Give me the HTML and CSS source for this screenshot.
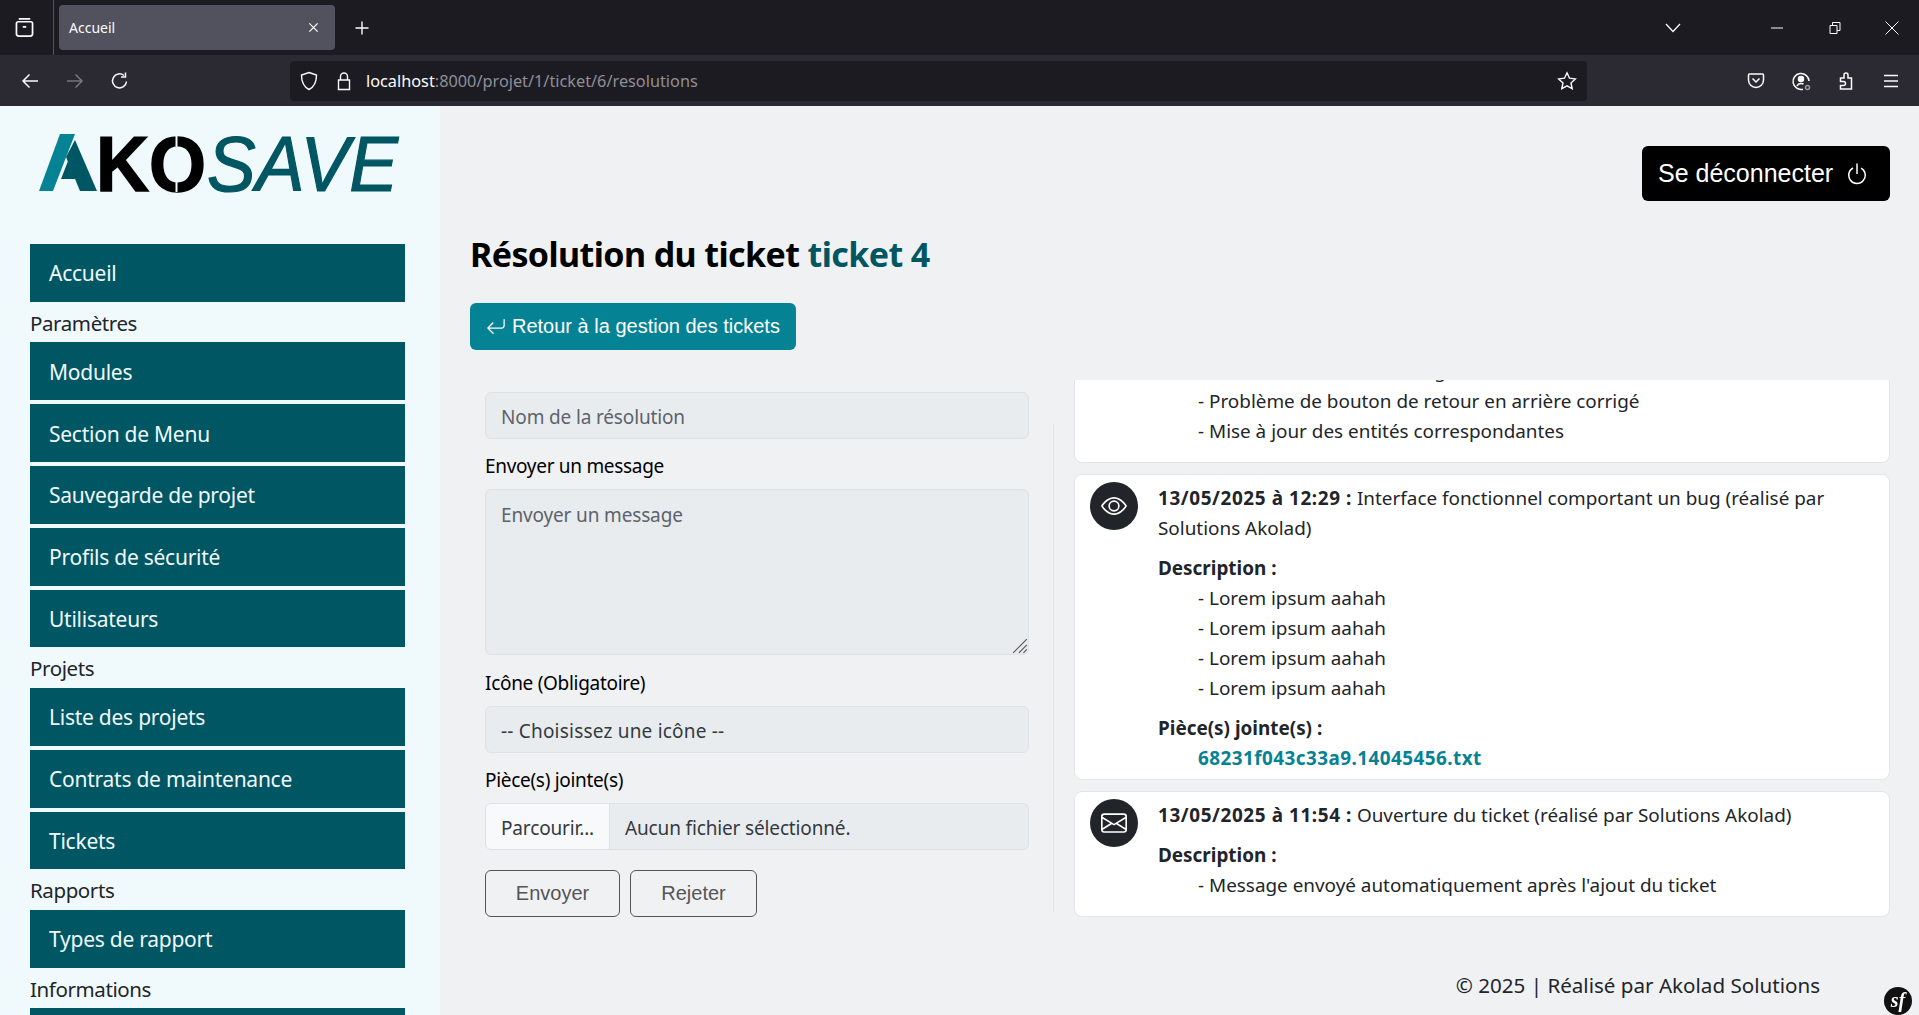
FILE: index.html
```html
<!DOCTYPE html>
<html lang="fr">
<head>
    <meta charset="UTF-8">
    <meta name="viewport" content="width=device-width, initial-scale=1.0">
    <title>Accueil</title>
    <link rel="stylesheet" href="styles.css">
</head>
<body>
    <!-- browser window -->
    <div class="tabbar">
        <div class="tab-view">
            <svg class="ico" viewBox="0 0 20 20"><path d="M5 2.500h10M3 6.500a1.500 1.500 0 0 1 1.500-1.500h11a1.500 1.500 0 0 1 1.500 1.500v9a2 2 0 0 1-2 2H5a2 2 0 0 1-2-2zM8.500 9.500h3"/></svg>
        </div>
        <div class="tab">
            <span class="tab-title">Accueil</span>
            <svg class="tab-close" viewBox="0 0 12 12"><path d="M1.500 1.500l9 9M10.500 1.500l-9 9"/></svg>
        </div>
        <svg class="tab-new" viewBox="0 0 16 16"><path d="M8 1.500v13M1.500 8h13"/></svg>
        <div class="tabbar-right">
            <svg class="tab-list" viewBox="0 0 16 10"><path d="M1 1l7 7.500L15 1"/></svg>
            <svg class="win-btn win-min" viewBox="0 0 12 12"><path d="M0 6h12"/></svg>
            <svg class="win-btn win-max" viewBox="0 0 12 12"><path d="M1 3.500h7v8H1zM3.500 3.500V.5h7.500v8H8"/></svg>
            <svg class="win-btn win-close" viewBox="0 0 14 14"><path d="M.5.5l13 13M13.500.5l-13 13"/></svg>
        </div>
    </div>
    <div class="toolbar">
        <svg class="nav-ico" viewBox="0 0 20 20"><path d="M18 10H3M9.500 3.500L3 10l6.500 6.500"/></svg>
        <svg class="nav-ico nav-off" viewBox="0 0 20 20"><path d="M2 10h15M10.500 3.500L17 10l-6.500 6.500"/></svg>
        <svg class="nav-ico" viewBox="0 0 20 20"><path d="M16.500 10.500a7 7 0 1 1-2.500-6M15.500 1.500v4.500h-4.500"/></svg>
        <div class="urlbar">
            <svg class="url-ico" viewBox="0 0 20 20"><path d="M10 1.500l7.500 2.500c0 7-1.500 11.500-7.500 14.500C4 15.500 2.500 11 2.500 4z"/></svg>
            <svg class="url-ico url-lock" viewBox="0 0 20 20"><path d="M4.500 9h11v9.500h-11zM6.500 9V5.500a3.500 3.500 0 0 1 7 0V9"/></svg>
            <span class="url-text"><span class="url-host">localhost</span>:8000/projet/1/ticket/6/resolutions</span>
            <svg class="url-star" viewBox="0 0 20 20"><path d="M10 1.800l2.500 5.400 5.800.7-4.300 4 1.200 5.800-5.200-2.900-5.200 2.900 1.200-5.800-4.300-4 5.800-.7z"/></svg>
        </div>
        <div class="toolbar-right">
            <svg class="nav-ico" viewBox="0 0 20 20"><path d="M3.500 3h13a1 1 0 0 1 1 1v5a7.500 7.500 0 0 1-15 0V4a1 1 0 0 1 1-1zM6.500 7.500L10 11l3.500-3.500"/></svg>
            <svg class="nav-ico" viewBox="0 0 20 20"><path d="M12 18.200A8 8 0 1 1 18 10M6 15c1-2 2.500-2.500 4-2.500s2 .3 2.500.8"/><circle cx="10" cy="8" r="2.500" fill="#fbfbfe"/><circle cx="16.500" cy="16.500" r="2" class="dot"/></svg>
            <svg class="nav-ico" viewBox="0 0 20 20"><path d="M4.500 7h3.500V4a2 2 0 0 1 4 0v3h3.500v11h-11v-3.500h3a2 2 0 0 0 0-4h-3z"/></svg>
            <svg class="nav-ico" viewBox="0 0 20 20"><path d="M3 4.500h14M3 10h14M3 15.500h14"/></svg>
        </div>
    </div>

    <div class="app">
        <aside class="sidebar">
            <div class="logo">
                <svg class="logo-svg" viewBox="0 0 370 62">
                    <polygon class="logo-teal" points="0,57 14,57 36,0 21,0"/>
                    <polygon class="logo-dark" points="36,6 58,57 41,57 27,23"/>
                    <polygon class="logo-dark" points="22,45 37,45 29,27"/>
                    <text class="logo-ko" x="57" y="57" textLength="110" lengthAdjust="spacingAndGlyphs">KO</text>
                    <rect class="logo-cut" x="136.500" y="0" width="2" height="14"/>
                    <rect class="logo-cut" x="136.500" y="44" width="2" height="14"/>
                    <text class="logo-save" x="168" y="57" textLength="191" lengthAdjust="spacingAndGlyphs">SAVE</text>
                </svg>
            </div>
            <nav class="menu">
                <a class="menu-item">Accueil</a>
                <div class="menu-label">Paramètres</div>
                <div class="menu-group">
                    <a class="menu-item">Modules</a>
                    <a class="menu-item">Section de Menu</a>
                    <a class="menu-item">Sauvegarde de projet</a>
                    <a class="menu-item">Profils de sécurité</a>
                    <a class="menu-item">Utilisateurs</a>
                </div>
                <div class="menu-label">Projets</div>
                <div class="menu-group">
                    <a class="menu-item">Liste des projets</a>
                    <a class="menu-item">Contrats de maintenance</a>
                    <a class="menu-item">Tickets</a>
                </div>
                <div class="menu-label">Rapports</div>
                <a class="menu-item">Types de rapport</a>
                <div class="menu-label">Informations</div>
                <a class="menu-item"></a>
            </nav>
        </aside>

        <main class="content">
            <div class="topbar">
                <button class="logout-btn">Se déconnecter
                    <svg class="logout-ico" viewBox="0 0 16 16"><path d="M7.500 1v7h1V1z"/><path d="M3 8.812a5 5 0 0 1 2.578-4.375l-.485-.874A6 6 0 1 0 11 3.616l-.501.865A5 5 0 1 1 3 8.812"/></svg>
                </button>
            </div>
            <h1 class="page-title">Résolution du ticket <span class="title-accent">ticket 4</span></h1>
            <button class="back-btn">
                <svg class="back-ico" viewBox="0 0 16 16"><path d="M14.500 1.500a.5.5 0 0 1 .5.5v4.800a2.500 2.500 0 0 1-2.500 2.500H2.707l3.347 3.346a.5.5 0 0 1-.708.708l-4.200-4.200a.5.5 0 0 1 0-.708l4-4a.5.5 0 1 1 .708.708L2.707 8.300H12.500A1.500 1.500 0 0 0 14 6.800V2a.5.5 0 0 1 .5-.5"/></svg>
                Retour à la gestion des tickets
            </button>

            <div class="ticket-row">
                <form class="res-form">
                    <input class="field field-name" type="text" placeholder="Nom de la résolution">
                    <label class="field-label">Envoyer un message</label>
                    <div class="area-wrap">
                        <textarea class="field field-area" placeholder="Envoyer un message"></textarea>
                        <svg class="area-grip" viewBox="0 0 14 14"><path d="M1 13L13 1M6 13l7-7M10 13l3-3"/></svg>
                    </div>
                    <label class="field-label">Icône (Obligatoire)</label>
                    <div class="field field-select">-- Choisissez une icône --</div>
                    <label class="field-label">Pièce(s) jointe(s)</label>
                    <div class="field field-file">
                        <span class="file-btn">Parcourir...</span>
                        <span class="file-name">Aucun fichier sélectionné.</span>
                    </div>
                    <div class="form-actions">
                        <button type="button" class="outline-btn btn-send">Envoyer</button>
                        <button type="button" class="outline-btn btn-reject">Rejeter</button>
                    </div>
                </form>
                <div class="row-sep"></div>
                <div class="timeline">
                    <div class="event event-pad">
                        <div class="event-spacer"></div>
                        <div class="event-body">
                            <p class="event-item">- Amélioration du titre design</p>
                            <p class="event-item">- Problème de bouton de retour en arrière corrigé</p>
                            <p class="event-item">- Mise à jour des entités correspondantes</p>
                        </div>
                    </div>
                    <div class="event">
                        <div class="event-icon">
                            <svg class="event-svg" viewBox="0 0 16 16"><path d="M16 8s-3-5.500-8-5.500S0 8 0 8s3 5.500 8 5.500S16 8 16 8M1.173 8a13 13 0 0 1 1.660-2.043C4.120 4.668 5.880 3.500 8 3.500s3.879 1.168 5.168 2.457A13 13 0 0 1 14.828 8q-.086.130-.195.288c-.335.480-.830 1.120-1.465 1.755C11.879 11.332 10.119 12.500 8 12.500s-3.879-1.168-5.168-2.457A13 13 0 0 1 1.172 8z"/><path d="M8 5.500a2.500 2.500 0 1 0 0 5 2.500 2.500 0 0 0 0-5M4.500 8a3.500 3.500 0 1 1 7 0 3.500 3.500 0 0 1-7 0"/></svg>
                        </div>
                        <div class="event-body">
                            <p class="event-line"><b class="event-date">13/05/2025 à 12:29 :</b> Interface fonctionnel comportant un bug (réalisé par Solutions Akolad)</p>
                            <p class="event-head"><b>Description :</b></p>
                            <p class="event-item">- Lorem ipsum aahah</p>
                            <p class="event-item">- Lorem ipsum aahah</p>
                            <p class="event-item">- Lorem ipsum aahah</p>
                            <p class="event-item">- Lorem ipsum aahah</p>
                            <p class="event-head"><b>Pièce(s) jointe(s) :</b></p>
                            <p class="event-item"><a class="event-file">68231f043c33a9.14045456.txt</a></p>
                        </div>
                    </div>
                    <div class="event event-pad">
                        <div class="event-icon">
                            <svg class="event-svg" viewBox="0 0 16 16"><path d="M0 4a2 2 0 0 1 2-2h12a2 2 0 0 1 2 2v8a2 2 0 0 1-2 2H2a2 2 0 0 1-2-2zm2-1a1 1 0 0 0-1 1v.217l7 4.200 7-4.200V4a1 1 0 0 0-1-1zm13 2.383-4.708 2.825L15 11.105zm-.034 6.876-5.640-3.471L8 9.583l-1.326-.795-5.640 3.470A1 1 0 0 0 2 13h12a1 1 0 0 0 .966-.741M1 11.105l4.708-2.897L1 5.383z"/></svg>
                        </div>
                        <div class="event-body">
                            <p class="event-line"><b class="event-date">13/05/2025 à 11:54 :</b> Ouverture du ticket (réalisé par Solutions Akolad)</p>
                            <p class="event-head"><b>Description :</b></p>
                            <p class="event-item">- Message envoyé automatiquement après l'ajout du ticket</p>
                        </div>
                    </div>
                </div>
            </div>

            <footer class="page-footer">© 2025 | Réalisé par Akolad Solutions</footer>
        </main>
    </div>

    <div class="sf-badge">sf</div>
</body>
</html>
```
FILE: styles.css
```css
* {
    box-sizing: border-box;
}
html, body {
    height: 100%;
}
body {
    margin: 0;
    overflow: hidden;
    font-family: "Noto Sans", sans-serif;
    color: #212529;
    background-color: #f0f1f3;
}

/* browser chrome */
.tabbar {
    display: flex;
    align-items: center;
    height: 55px;
    background-color: #1c1b22;
}
.tab-view {
    display: flex;
    align-items: center;
    justify-content: center;
    width: 54px;
    height: 55px;
    padding-right: 5px;
    border-right: 1px solid #55545c;
}
.ico {
    width: 23px;
    height: 23px;
    fill: none;
    stroke: #fbfbfe;
    stroke-width: 1.5;
}
.tab {
    display: flex;
    align-items: center;
    justify-content: space-between;
    width: 276px;
    height: 45px;
    margin-left: 5px;
    padding: 0 16px 0 10px;
    border-radius: 4px;
    background-color: #52515e;
    color: #fbfbfe;
    font-size: 14px;
}
.tab-close {
    width: 11px;
    height: 11px;
    fill: none;
    stroke: #fbfbfe;
    stroke-width: 1.4;
}
.tab-new {
    width: 16px;
    height: 16px;
    margin-left: 19px;
    fill: none;
    stroke: #fbfbfe;
    stroke-width: 1.4;
}
.tabbar-right {
    display: flex;
    align-items: center;
    margin-left: auto;
    padding-right: 20px;
}
.tab-list {
    width: 16px;
    height: 10px;
    margin-right: 90px;
    fill: none;
    stroke: #fbfbfe;
    stroke-width: 1.3;
}
.win-btn {
    fill: none;
    stroke: #fbfbfe;
    stroke-width: 1;
}
.win-min {
    width: 12px;
    height: 12px;
    margin-right: 46px;
}
.win-max {
    width: 12px;
    height: 12px;
    margin-right: 44px;
}
.win-close {
    width: 14px;
    height: 14px;
}
.toolbar {
    display: flex;
    align-items: center;
    height: 51px;
    padding-left: 20px;
    background-color: #2b2a33;
}
.nav-ico {
    flex: none;
    width: 20px;
    height: 20px;
    margin-right: 25px;
    fill: none;
    stroke: #fbfbfe;
    stroke-width: 1.5;
}
.nav-off {
    stroke: #77767c;
}
.dot {
    fill: #2b2a33;
    stroke: #9a999f;
}
.urlbar {
    display: flex;
    align-items: center;
    flex: none;
    width: 1297px;
    height: 40px;
    margin-left: 135px;
    padding: 0 10px 0 9px;
    border-radius: 4px;
    background-color: #1c1b22;
}
.url-ico {
    width: 20px;
    height: 20px;
    fill: none;
    stroke: #fbfbfe;
    stroke-width: 1.4;
}
.url-lock {
    margin-left: 15px;
}
.url-text {
    margin-left: 12px;
    color: #8f8f96;
    font-size: 16.3px;
}
.url-host {
    color: #fbfbfe;
}
.url-star {
    width: 20px;
    height: 20px;
    margin-left: auto;
    fill: none;
    stroke: #fbfbfe;
    stroke-width: 1.4;
}
.toolbar-right {
    display: flex;
    margin-left: 159px;
}

/* app layout */
.app {
    display: flex;
    height: 909px;
    overflow: hidden;
}
.sidebar {
    flex: none;
    width: 440px;
    padding: 0 35px 0 30px;
    overflow: hidden;
    background-color: #f0f9fb;
}
.logo {
    height: 138px;
    padding: 28px 0 0 9px;
}
.logo-svg {
    display: block;
    width: 370px;
    height: 62px;
}
.logo-teal {
    fill: #068295;
}
.logo-dark {
    fill: #005662;
}
.logo-ko {
    font-family: "Liberation Sans", sans-serif;
    font-weight: 700;
    font-size: 78px;
    fill: #000;
    stroke: #000;
    stroke-width: 1.5;
}
.logo-cut {
    fill: #f0f9fb;
}
.logo-save {
    font-family: "Liberation Sans", sans-serif;
    font-style: italic;
    font-size: 78px;
    fill: #005662;
    stroke: #005662;
    stroke-width: 1.2;
}
.menu-group {
    display: flex;
    flex-direction: column;
    gap: 4px;
}
.menu-item {
    display: flex;
    align-items: center;
    height: 57.8px;
    padding: 1px 0 0 19px;
    background-color: #005662;
    color: #f0f9fb;
    font-size: 21px;
    letter-spacing: -0.25px;
}
.menu-label {
    display: flex;
    align-items: center;
    height: 40.6px;
    padding-top: 1px;
    font-size: 20.5px;
    letter-spacing: -0.4px;
}

.content {
    flex: 1;
    min-width: 0;
    padding: 0 29px 0 30px;
}
.topbar {
    display: flex;
    justify-content: flex-end;
    padding-top: 40px;
}
.logout-btn {
    display: flex;
    align-items: center;
    gap: 12px;
    width: 248px;
    height: 55px;
    padding: 0 0 0 16px;
    border: none;
    border-radius: 6px;
    background-color: #000;
    color: #fff;
    font-family: "Liberation Sans", sans-serif;
    font-size: 25px;
}
.logout-ico {
    width: 24px;
    height: 24px;
    fill: #fff;
}
.page-title {
    margin: 31px 0 0;
    font-size: 34px;
    line-height: 44px;
    font-weight: 700;
    color: #000;
    letter-spacing: -0.6px;
}
.title-accent {
    color: #005662;
}
.back-btn {
    display: flex;
    align-items: center;
    gap: 6px;
    height: 47px;
    margin-top: 27px;
    padding: 0 16px;
    border: none;
    border-radius: 6px;
    background-color: #068295;
    color: #fff;
    font-family: "Liberation Sans", sans-serif;
    font-size: 20px;
}
.back-ico {
    width: 20px;
    height: 20px;
    fill: #fff;
}
.ticket-row {
    display: flex;
    height: 537px;
    margin-top: 30px;
}
.res-form {
    width: 559px;
    margin-left: 15px;
    padding: 12px 15px 0 0;
}
.field {
    display: block;
    width: 100%;
    height: 47px;
    padding: 0 15px;
    border: 1px solid #dee2e6;
    border-radius: 6px;
    background-color: #e9ecef;
    color: #212529;
    font-family: "Noto Sans", sans-serif;
    font-size: 19px;
    letter-spacing: -0.15px;
}
.field::placeholder {
    color: #5c636a;
    opacity: 1;
}
.field-name {
    padding-top: 2px;
}
.field-label {
    display: flex;
    align-items: center;
    height: 50px;
    padding-top: 3px;
    color: #000;
    font-size: 19px;
    letter-spacing: -0.3px;
}
.area-wrap {
    position: relative;
    height: 167px;
}
.field-area {
    height: 166px;
    padding-top: 11px;
    outline: none;
    resize: none;
    line-height: 28px;
}
.area-grip {
    position: absolute;
    right: 1px;
    bottom: 2px;
    width: 16px;
    height: 16px;
    fill: none;
    stroke: #555;
    stroke-width: 1;
}
.field-select {
    display: flex;
    align-items: center;
    padding-top: 2px;
    color: #343a40;
    letter-spacing: 0.2px;
}
.field-file {
    display: flex;
    align-items: center;
    padding: 0;
    overflow: hidden;
    color: #343a40;
}
.file-btn {
    display: flex;
    align-items: center;
    height: 100%;
    padding: 2px 15px 0;
    background-color: #f8f9fa;
    border-right: 1px solid #dee2e6;
}
.file-name {
    padding: 2px 0 0 15px;
}
.form-actions {
    display: flex;
    gap: 10px;
    margin-top: 20px;
}
.outline-btn {
    height: 47px;
    border: 1px solid #555;
    border-radius: 6px;
    background: transparent;
    color: #555;
    font-family: "Liberation Sans", sans-serif;
    font-size: 20px;
    padding: 0;
}
.btn-send {
    width: 135px;
}
.btn-reject {
    width: 127px;
}
.row-sep {
    flex: none;
    width: 1px;
    margin: 44px 0 5px 9px;
    background-color: #dee2e6;
}
.timeline {
    display: flex;
    flex-direction: column;
    justify-content: flex-end;
    gap: 11px;
    flex: 1;
    min-width: 0;
    margin-left: 20px;
    overflow: hidden;
}
.event {
    display: flex;
    flex: none;
    gap: 20px;
    padding: 7px 15px 6px 15px;
    border: 1px solid #e3e5e8;
    border-radius: 8px;
    background-color: #fff;
    color: #212529;
    font-size: 18.9px;
    line-height: 30px;
}
.event-pad {
    padding-bottom: 16px;
}
.event-icon {
    display: flex;
    flex: none;
    align-items: center;
    justify-content: center;
    width: 48px;
    height: 48px;
    border-radius: 50%;
    background-color: #212529;
}
.event-spacer {
    flex: none;
    width: 48px;
}
.event-svg {
    width: 26px;
    height: 26px;
    fill: #fff;
}
.event-body {
    flex: 1;
    min-width: 0;
    padding-top: 1px;
}
.event-line {
    margin: 0;
}
.event-date {
    letter-spacing: 0.6px;
}
.event-head {
    margin: 10px 0 0;
}
.event-item {
    margin: 0 0 0 40px;
}
.event-file {
    color: #068295;
    font-weight: 700;
    letter-spacing: 0.45px;
}
.page-footer {
    margin-top: 53px;
    padding-right: 70px;
    text-align: right;
    color: #212529;
    font-size: 20.6px;
    line-height: 30px;
}

/* symfony toolbar badge */
.sf-badge {
    position: fixed;
    right: 7px;
    bottom: 0;
    width: 28px;
    height: 28px;
    border-radius: 50%;
    background-color: #111;
    color: #fff;
    font-family: "Liberation Serif", serif;
    font-style: italic;
    font-weight: 700;
    font-size: 20px;
    line-height: 26px;
    text-align: center;
}
```
